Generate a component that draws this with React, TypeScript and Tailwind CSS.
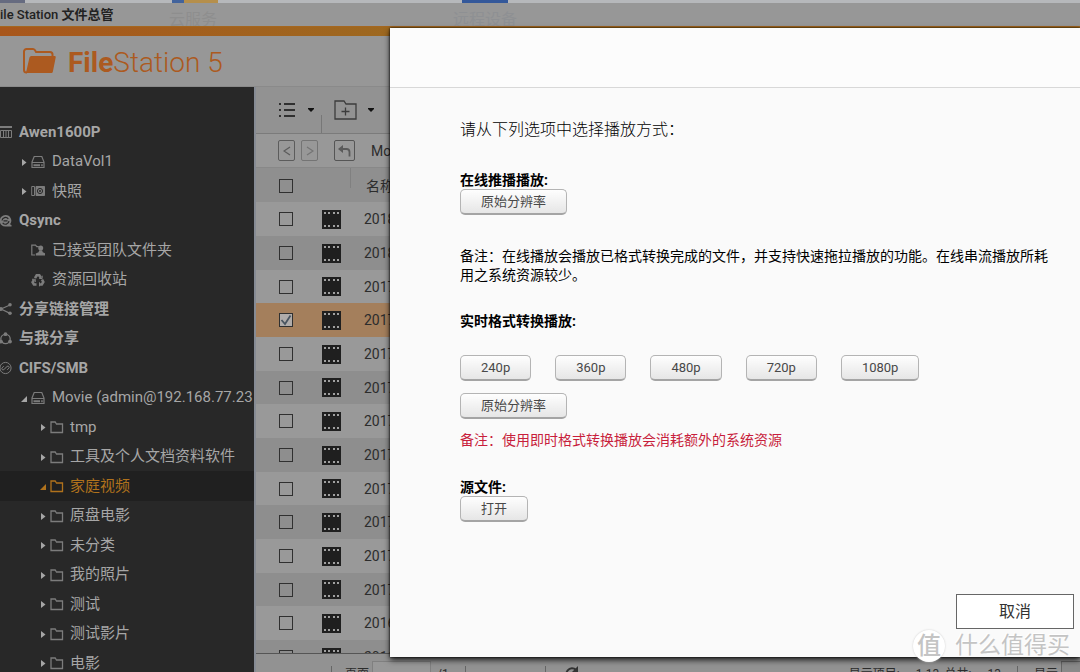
import React from "react";

type IconName =
  | "nas"
  | "drive"
  | "snapshot"
  | "qsync"
  | "team"
  | "recycle"
  | "share"
  | "shared"
  | "mount"
  | "folder";

type TreeNode = {
  label: string;
  level: 0 | 1 | 2;
  icon: IconName;
  arrow?: "closed" | "open";
  selected?: boolean;
};

const tree: TreeNode[] = [
  { label: "Awen1600P", level: 0, icon: "nas" },
  { label: "DataVol1", level: 1, icon: "drive", arrow: "closed" },
  { label: "快照", level: 1, icon: "snapshot", arrow: "closed" },
  { label: "Qsync", level: 0, icon: "qsync" },
  { label: "已接受团队文件夹", level: 1, icon: "team" },
  { label: "资源回收站", level: 1, icon: "recycle" },
  { label: "分享链接管理", level: 0, icon: "share" },
  { label: "与我分享", level: 0, icon: "shared" },
  { label: "CIFS/SMB", level: 0, icon: "mount" },
  { label: "Movie (admin@192.168.77.23", level: 1, icon: "drive", arrow: "open" },
  { label: "tmp", level: 2, icon: "folder", arrow: "closed" },
  { label: "工具及个人文档资料软件", level: 2, icon: "folder", arrow: "closed" },
  { label: "家庭视频", level: 2, icon: "folder", arrow: "open", selected: true },
  { label: "原盘电影", level: 2, icon: "folder", arrow: "closed" },
  { label: "未分类", level: 2, icon: "folder", arrow: "closed" },
  { label: "我的照片", level: 2, icon: "folder", arrow: "closed" },
  { label: "测试", level: 2, icon: "folder", arrow: "closed" },
  { label: "测试影片", level: 2, icon: "folder", arrow: "closed" },
  { label: "电影", level: 2, icon: "folder", arrow: "closed" },
];

const files = [
  "2018", "2018", "2017", "2017", "2017", "2017", "2017",
  "2017", "2017", "2017", "2017", "2017", "2016", "2016",
];

function TreeIcon({ name }: { name: IconName }) {
  return (
    <svg viewBox="0 0 14 14" className="size-[14px] shrink-0" fill="none" stroke="currentColor" aria-hidden="true">
      {name === "nas" && (
        <g>
          <path d="M0 2h12" strokeWidth="2" />
          <path d="M.5 5.5h11v7H.5zM3.5 6v6M6 6v6M8.500 6v6" />
        </g>
      )}
      {name === "drive" && (
        <g>
          <path d="M1 7 3.2 1.5h7.6L13 7v5.500H1zM1 7.500h12" strokeWidth="1.200" />
          <path d="M2.500 10.200h6.500M10.200 10.200h1.500" strokeWidth="2" />
        </g>
      )}
      {name === "snapshot" && (
        <g>
          <path d="M5 2.500h8.500v9H5z" fill="currentColor" />
          <path d="M3.500 2.500H.7v9h2.800z" />
          <circle cx="9" cy="7" r="2.600" stroke="#282828" />
          <circle cx="9" cy="7" r=".7" stroke="#282828" />
        </g>
      )}
      {name === "qsync" && (
        <g>
          <path d="M5.500 1a5.700 5.700 0 1 0 0 11.600h6v-1.500l-1.500-.8A5.700 5.700 0 0 0 5.500 1z" fill="currentColor" stroke="none" />
          <path d="M2 6.500a3.500 3.500 0 0 1 6.300-1.600M9 7.200a3.500 3.500 0 0 1-6.300 1.600M3.500 6.800h4" stroke="#282828" strokeWidth="1.200" />
        </g>
      )}
      {name === "team" && (
        <g>
          <path d="M4 12H.8V2.200h3.700l1.300 1.500h2" strokeWidth="1.200" />
          <circle cx="9.700" cy="5" r="2.500" fill="currentColor" stroke="none" />
          <path d="M4.800 12.500v-2l2.700-1.300.8-2h2.800l.7 2 2.200 1v2.300z" fill="currentColor" stroke="none" />
        </g>
      )}
      {name === "recycle" && (
        <g strokeWidth="2.600">
          <path d="M4 5.200 5.700 2.300h2.600L10 5" />
          <path d="M11 6.500 12.300 9l-1.500 2.500H8" />
          <path d="M5.500 11.500H3L1.600 9.200 3 6.800" />
          <path d="M8.200 5.500h3V2.700M8.500 9.300v4M1 6.300h3.300V9" strokeWidth="1" />
        </g>
      )}
      {name === "share" && (
        <g strokeWidth="1.300">
          <path d="m1 7 9-4M1 7l9 4.300" />
          <g fill="currentColor" stroke="none">
            <circle cx="1" cy="7" r="1.900" />
            <circle cx="10" cy="2.800" r="1.800" />
            <circle cx="10" cy="11.300" r="1.800" />
          </g>
        </g>
      )}
      {name === "shared" && (
        <g>
          <circle cx="5.500" cy="7" r="4.700" strokeWidth="1.300" />
          <g fill="currentColor" stroke="none">
            <circle cx="5.500" cy="2.200" r="1.900" />
            <circle cx="1" cy="9.600" r="1.900" />
            <circle cx="10" cy="9.600" r="1.900" />
          </g>
        </g>
      )}
      {name === "mount" && (
        <g>
          <circle cx="5.500" cy="7" r="5.600" />
          <path d="m4.800 7.700-1 1a1.300 1.300 0 0 1-1.800-1.800l1.800-1.700M6.200 6.300l1-1A1.300 1.300 0 0 1 9 7.100L7.200 8.800M4.200 8.300l2.700-2.700" />
        </g>
      )}
      {name === "folder" && <path d="M1 2h4.200l1.300 2h6v8.500H1z" strokeWidth="1.300" />}
    </svg>
  );
}

function Arrow({ state }: { state?: "closed" | "open" }) {
  return (
    <svg viewBox="0 0 6 8" className="h-2 w-1.5 shrink-0" fill="currentColor" aria-hidden="true">
      {state === "closed" && <path d="M1 1 5.500 4.500 1 8z" />}
      {state === "open" && <path d="M6 2v6H0z" />}
    </svg>
  );
}

function Sidebar() {
  const indent = ["pl-0", "pl-[21px]", "pl-[40px]"];
  const iconWidth = ["w-[19px]", "w-[21px]", "w-5"];
  return (
    <nav aria-label="文件夹" className="w-[254px] shrink-0 overflow-hidden bg-[#282828] pt-[30px]">
      <ul>
        {tree.map((n) => (
          <li
            key={n.label}
            className={`flex items-center text-[15px] whitespace-nowrap odd:h-[30px] even:h-[29px] ${indent[n.level]} ${
              n.selected ? "bg-[#202020] text-[#b0721c]" : "text-[#a6a6a6]"
            }`}
          >
            {n.level > 0 && (
              <span className="flex w-[10px] shrink-0">
                <Arrow state={n.arrow} />
              </span>
            )}
            <span className={`flex shrink-0 ${iconWidth[n.level]} ${n.selected ? "" : "text-[#7c7c7c]"}`}>
              <TreeIcon name={n.icon} />
            </span>
            <a href="#" className={n.level === 0 ? "font-bold" : ""}>{n.label}</a>
          </li>
        ))}
      </ul>
    </nav>
  );
}

function FilmIcon() {
  return (
    <svg viewBox="0 0 19 19" className="size-[19px]" aria-hidden="true">
      <path d="M0 0h19v19H0z" fill="#1f1f1f" />
      <path
        d="M2 2h2v2H2zM6 2h2v2H6zM11 2h2v2h-2zM15 2h2v2h-2zM2 15h2v2H2zM6 15h2v2H6zM11 15h2v2h-2zM15 15h2v2h-2z"
        fill="#a0a0a0"
      />
    </svg>
  );
}

function Tick({ label, checked }: { label: string; checked?: boolean }) {
  return (
    <span className="grid size-[14px]">
      <input
        type="checkbox"
        aria-label={label}
        defaultChecked={checked}
        className="peer col-start-1 row-start-1 size-[14px] appearance-none border border-[#303030] checked:bg-[#b0acaa]"
      />
      <svg viewBox="0 0 14 14" className="pointer-events-none col-start-1 row-start-1 hidden size-[14px] peer-checked:block" fill="none" aria-hidden="true">
        <path d="m2.500 7 3.500 4L11.500 2.500" stroke="#4a5560" strokeWidth="1.800" />
      </svg>
    </span>
  );
}

function Caret() {
  return (
    <svg viewBox="0 0 6 4" className="h-1 w-1.5" aria-hidden="true">
      <path d="M0 0h6v1L3 4 0 1z" fill="#111" />
    </svg>
  );
}

function FileList() {
  return (
    <main className="flex min-w-0 flex-1 flex-col border-l-2 border-[#868b94] bg-[#989898] text-[#2c2c2c]">
      <div className="flex h-[47px] shrink-0 items-center border-b border-[#7b7b7b] bg-[#929292] pl-[22px]">
        <button aria-label="查看方式" className="flex w-[43px] items-center justify-between pr-[7px]">
          <svg viewBox="0 0 18 16" className="h-4 w-[18px]" stroke="#2f2f2f" strokeWidth="2" aria-hidden="true">
            <path d="M6 2h11M6 8h11M6 14h11M1 2h2M1 8h2M1 14h2" />
          </svg>
          <Caret />
        </button>
        <span className="h-[18px] w-px self-end bg-[#777]" />
        <button aria-label="创建文件夹" className="ml-[12px] flex items-center gap-[11px]">
          <svg viewBox="0 0 23 20" className="h-5 w-[23px]" fill="none" stroke="#3c3c3c" strokeWidth="1.300" aria-hidden="true">
            <path d="M1 1h9l2 3h10v15H1zM11.500 7.500v8M7.500 11.500h8" />
          </svg>
          <Caret />
        </button>
      </div>
      <div className="flex h-[34px] shrink-0 items-center border-b border-[#888] pl-[22px]">
        <button aria-label="后退" className="flex h-[21px] w-[17px] items-center justify-center rounded-xs border border-[#5c5c5c]">
          <svg viewBox="0 0 8 10" className="h-2.5 w-2" fill="none" stroke="#5c5c5c" strokeWidth="1.300" aria-hidden="true"><path d="M7 1 1 5l6 4" /></svg>
        </button>
        <button aria-label="前进" className="ml-1.5 flex h-[21px] w-[17px] items-center justify-center rounded-xs border border-[#747474]">
          <svg viewBox="0 0 8 10" className="h-2.5 w-2" fill="none" stroke="#747474" strokeWidth="1.300" aria-hidden="true"><path d="m1 1 6 4-6 4" /></svg>
        </button>
        <button aria-label="上一层" className="ml-4 flex h-[21px] w-[21px] items-center justify-center rounded-xs border border-[#555]">
          <svg viewBox="0 0 13 12" className="h-3 w-[13px]" fill="none" stroke="#5a5a5a" strokeWidth="1.800" aria-hidden="true">
            <path d="M3 4h5.500C10.500 4 11.500 5 11.500 7v4.500" />
            <path d="M5 0v8L0 4z" fill="#5a5a5a" stroke="none" />
          </svg>
        </button>
        <span className="ml-4 text-sm">Movie</span>
      </div>
      <div className="min-h-0 flex-1 overflow-hidden">
        <table className="w-full table-fixed border-collapse text-left text-sm">
          <colgroup>
            <col className="w-[66px]" />
            <col className="w-[29px]" />
            <col />
          </colgroup>
          <thead>
            <tr className="h-[34px] bg-[#8f8f8f]">
              <th className="pt-0.5 pl-[23px]"><Tick label="全选" /></th>
              <th className="align-top"><span className="ml-auto block h-5 w-px bg-[#808080]" /></th>
              <th className="pt-0.5 pl-[15px] font-normal">名称</th>
            </tr>
          </thead>
          <tbody>
            {files.map((f, i) => (
              <tr key={i} className={`h-[34px] nth-[3n]:h-[33px] ${i === 3 ? "bg-[#a47f5c]" : "odd:bg-[#999] even:bg-[#8e8e8e]"}`}>
                <td className="pl-[23px]"><Tick label={f} checked={i === 3} /></td>
                <td><FilmIcon /></td>
                <td className="pl-[13px]">{f}</td>
              </tr>
            ))}
          </tbody>
        </table>
      </div>
      <footer className="h-[19px] shrink-0 overflow-hidden border-t border-[#555] bg-[#929292] text-xs">
        <div className="flex h-[40px] items-center pl-[75px]">
          <span className="h-4 w-px bg-[#666]" />
          <label htmlFor="page" className="ml-[13px]">页面</label>
          <input id="page" className="ml-[3px] h-[26px] w-[59px] border border-[#808080] bg-[#989898]" />
          <span className="ml-1.5">/1</span>
          <span className="ml-4 h-4 w-px bg-[#666]" />
          <span className="ml-[79px] h-4 w-px bg-[#666]" />
          <button aria-label="刷新" className="ml-[18px]">
            <svg viewBox="0 0 16 16" className="size-4" fill="none" stroke="#333" strokeWidth="2" aria-hidden="true">
              <path d="M13 10a5.500 5.500 0 1 1-1-6" />
              <path d="M14 0v6H8z" fill="#333" stroke="none" />
            </svg>
          </button>
          <span className="ml-auto">显示项目:</span>
          <span className="ml-4">1-13, 总共:</span>
          <span className="ml-4">13</span>
          <span className="ml-4 h-4 w-px bg-[#666]" />
          <label htmlFor="size" className="ml-4">显示</label>
          <input id="size" className="ml-[3px] h-[26px] w-[19px] border border-r-0 border-[#666] bg-[#8a8a8a]" />
        </div>
      </footer>
    </main>
  );
}

function PlayButton({ children }: { children: React.ReactNode }) {
  return (
    <button className="h-[26px] rounded-[5px] border border-b-2 border-[#b4b4b4] border-b-[#a4a4a4] bg-linear-to-b from-[#fefefe] to-[#e6e6e6] px-5 text-[13px] leading-6 text-[#484848]">
      {children}
    </button>
  );
}

function PlaybackDialog() {
  return (
    <section
      role="dialog"
      aria-label="播放方式"
      className="absolute top-[28px] right-0 bottom-[15px] left-[390px] flex flex-col bg-[#fafafa] text-black shadow-[0_3px_6px_#000000cc,0_0_2px_#000000]"
    >
      <header className="h-[60px] shrink-0 border-b border-[#d8d8d8] bg-[#fcfcfc]" />
      <div className="flex-1 pt-8 pr-[30px] pl-[70px]">
        <h2 className="text-base leading-5 font-light">请从下列选项中选择播放方式：</h2>
        <h3 className="mt-[31px] text-sm leading-[18px] font-bold">在线推播播放:</h3>
        <PlayButton>原始分辨率</PlayButton>
        <p className="mt-8 text-sm leading-[19px]">
          备注：在线播放会播放已格式转换完成的文件，并支持快速拖拉播放的功能。在线串流播放所耗用之系统资源较少。
        </p>
        <h3 className="mt-[27px] text-sm leading-[18px] font-bold">实时格式转换播放:</h3>
        <div className="mt-[25px] mb-3 flex gap-6">
          <PlayButton>240p</PlayButton>
          <PlayButton>360p</PlayButton>
          <PlayButton>480p</PlayButton>
          <PlayButton>720p</PlayButton>
          <PlayButton>1080p</PlayButton>
        </div>
        <PlayButton>原始分辨率</PlayButton>
        <p className="mt-3 text-sm leading-[19px] text-[#c81e3c]">备注：使用即时格式转换播放会消耗额外的系统资源</p>
        <h3 className="mt-7 text-sm leading-[18px] font-bold">源文件:</h3>
        <PlayButton>打开</PlayButton>
      </div>
      <footer className="flex justify-end pr-[6px] pb-[28px]">
        <button className="h-[35px] w-[118px] border border-[#666] bg-white text-base text-[#333]">取消</button>
      </footer>
    </section>
  );
}

export default function App() {
  return (
    <div className="relative flex h-screen flex-col overflow-hidden bg-[#979797] font-['Roboto','Noto_Sans_CJK_SC',sans-serif]">
      <div className="flex h-[3px] shrink-0 bg-[#b6b8bb]">
        <span className="w-[25px] bg-[#666b80]" />
        <span className="ml-[147px] w-[12px] bg-[#42639c]" />
        <span className="w-[34px] bg-[#b58f4c]" />
        <span className="ml-[244px] w-[46px] bg-[#34589a]" />
      </div>
      <div className="flex h-[23px] shrink-0 items-center bg-[#979797] text-[13px] font-medium text-[#222]">
        <h1>
          ile Station <span className="font-bold">文件总管</span>
        </h1>
      </div>
      <span className="absolute top-3 left-[169px] text-base leading-4 text-[#8e8e8e]">云服务</span>
      <span className="absolute top-3 left-[453px] text-base leading-4 text-[#8e9093]">远程设备</span>
      <div className="z-0 h-[10px] shrink-0 border-t border-[#a5671f] bg-linear-to-r from-[#a8561b] via-[#9c6a20] via-40% to-[#9c6a20]" />
      <header className="flex h-[51px] shrink-0 items-center border-b border-[#8a8a8a] bg-[#979797] pl-[23px] text-[28px] leading-8 text-[#ac5a20]">
        <svg viewBox="0 0 33 26" className="h-[26px] w-[33px]" aria-hidden="true">
          <path d="M4 24.500H3.500a2.500 2.500 0 0 1-2.500-2.500V3.500A2.500 2.500 0 0 1 3.500 1H10c1.300 0 1.800.6 2.500 2l.6 1H27a2.500 2.500 0 0 1 2.500 2.500V8" fill="none" stroke="currentColor" strokeWidth="2" />
          <path d="M9 8h22.500c1 0 1.400.6 1.200 1.500l-2.800 14c-.2 1-.9 1.500-2 1.500H4.500c-1 0-1.400-.7-1.200-1.600L6.400 9.700C6.700 8.600 7.600 8 9 8z" fill="currentColor" />
        </svg>
        <p className="pt-1 pl-3">
          <span className="font-bold">File</span>
          <span className="font-light">Station 5</span>
        </p>
      </header>
      <div className="flex min-h-0 flex-1">
        <Sidebar />
        <FileList />
      </div>
      <PlaybackDialog />
      <div className="pointer-events-none absolute right-[10px] bottom-[10px] flex items-center gap-[10px] text-[#c4c4c4]">
        <span className="flex size-8 items-center justify-center rounded-full bg-white text-2xl leading-8 font-medium shadow-[0_0_2px_#cccccc]">值</span>
        <span className="text-[23px] leading-8 text-shadow-[-1px_-1px_0_#ffffff]">什么值得买</span>
      </div>
    </div>
  );
}
